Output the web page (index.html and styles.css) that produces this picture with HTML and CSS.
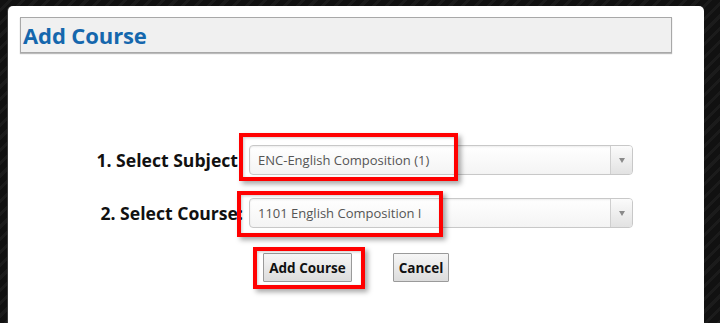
FILE: index.html
```html
<!DOCTYPE html>
<html>
<head>
<meta charset="utf-8">
<link rel="stylesheet" href="styles.css">
</head>
<body>
<div class="panel">
  <div class="header"><h1 class="title">Add Course</h1></div>
  <div class="form">
    <div class="row">
      <label class="label lbl1">1. Select Subject</label>
      <div class="select"><span class="sel-text">ENC-English Composition (1)</span><span class="arrow"><span class="tri"></span></span></div>
    </div>
    <div class="row row2">
      <label class="label">2. Select Course:</label>
      <div class="select"><span class="sel-text">1101 English Composition I</span><span class="arrow"><span class="tri"></span></span></div>
    </div>
    <div class="buttons">
      <button class="btn btn-add">Add Course</button>
      <button class="btn btn-cancel">Cancel</button>
    </div>
  </div>
  <div class="hl hl1"></div>
  <div class="hl hl2"></div>
  <div class="hl hl3"></div>
</div>
</body>
</html>
```
FILE: styles.css
```css
html, body {
  margin: 0;
  padding: 0;
  height: 100%;
}
body {
  background-color: #121212;
  background-image: repeating-linear-gradient(135deg, #111 0, #111 6px, #1b1b1b 6px, #1b1b1b 9px);
  font-family: "Open Sans", "DejaVu Sans", sans-serif;
  overflow: hidden;
}
.panel {
  position: relative;
  margin: 6px 0 0 8px;
  width: 696px;
  height: 330px;
  background: #fff;
  border-radius: 5px 5px 0 0;
  box-shadow: -1px 0 0 #3a3a3a;
  padding: 11px 32px 0 12px;
  box-sizing: border-box;
}
.header {
  height: 36px;
  background: #f0f0f0;
  border: 1px solid #a8a8a8;
  box-shadow: 0 1px 1px #bbb;
  box-sizing: border-box;
  padding: 0 0 0 2px;
}
.title {
  margin: 0;
  font-size: 22px;
  font-weight: 700;
  color: #1567ad;
  line-height: 34px;
  letter-spacing: -0.1px;
}
.form {
  margin-top: 92px;
}
.row {
  display: flex;
  align-items: center;
  height: 30px;
}
.row2 {
  margin-top: 23px;
}
.label {
  width: 224px;
  text-align: right;
  font-size: 17.6px;
  font-weight: 700;
  color: #111;
  padding-right: 1px;
  box-sizing: border-box;
  white-space: nowrap;
}
.lbl1 {
  padding-right: 6px;
}
.select {
  margin-left: 5px;
  width: 384px;
  height: 30px;
  display: flex;
  border: 1px solid #c8c8c8;
  border-radius: 4px;
  box-sizing: border-box;
  background: linear-gradient(#ffffff, #f4f4f4);
  box-shadow: inset 0 1px 2px rgba(0,0,0,0.08);
}
.sel-text {
  flex: 1;
  font-size: 13px;
  color: #555;
  line-height: 28px;
  padding-left: 8px;
}
.arrow {
  width: 21px;
  border-left: 1px solid #cfcfcf;
  background: linear-gradient(#fbfbfb, #e2e2e2);
  border-radius: 0 3px 3px 0;
  display: flex;
  align-items: center;
  justify-content: center;
}
.tri {
  width: 0;
  height: 0;
  border-left: 3px solid transparent;
  border-right: 3px solid transparent;
  border-top: 5px solid #8a8a8a;
}
.buttons {
  display: flex;
  margin-top: 25px;
  padding-left: 243px;
}
.btn {
  height: 29px;
  font-family: "Open Sans", "DejaVu Sans", sans-serif;
  font-size: 13.5px;
  font-weight: 700;
  color: #111;
  border: 1px solid #9a9a9a;
  background: linear-gradient(#f6f6f6, #dcdcdc);
  border-radius: 1px;
  padding: 0;
  box-sizing: border-box;
}
.btn-add {
  width: 89px;
}
.btn-cancel {
  width: 56px;
  margin-left: 41px;
}
.hl {
  position: absolute;
  border: 4px solid #f00;
  box-sizing: border-box;
  box-shadow: 3px 3px 5px rgba(0,0,0,0.35), inset 1px 1px 3px rgba(0,0,0,0.2);
}
.hl1 { left: 231px; top: 127px; width: 219px; height: 48px; }
.hl2 { left: 229px; top: 185px; width: 206px; height: 46px; }
.hl3 { left: 245px; top: 241px; width: 112px; height: 42px; }
```
